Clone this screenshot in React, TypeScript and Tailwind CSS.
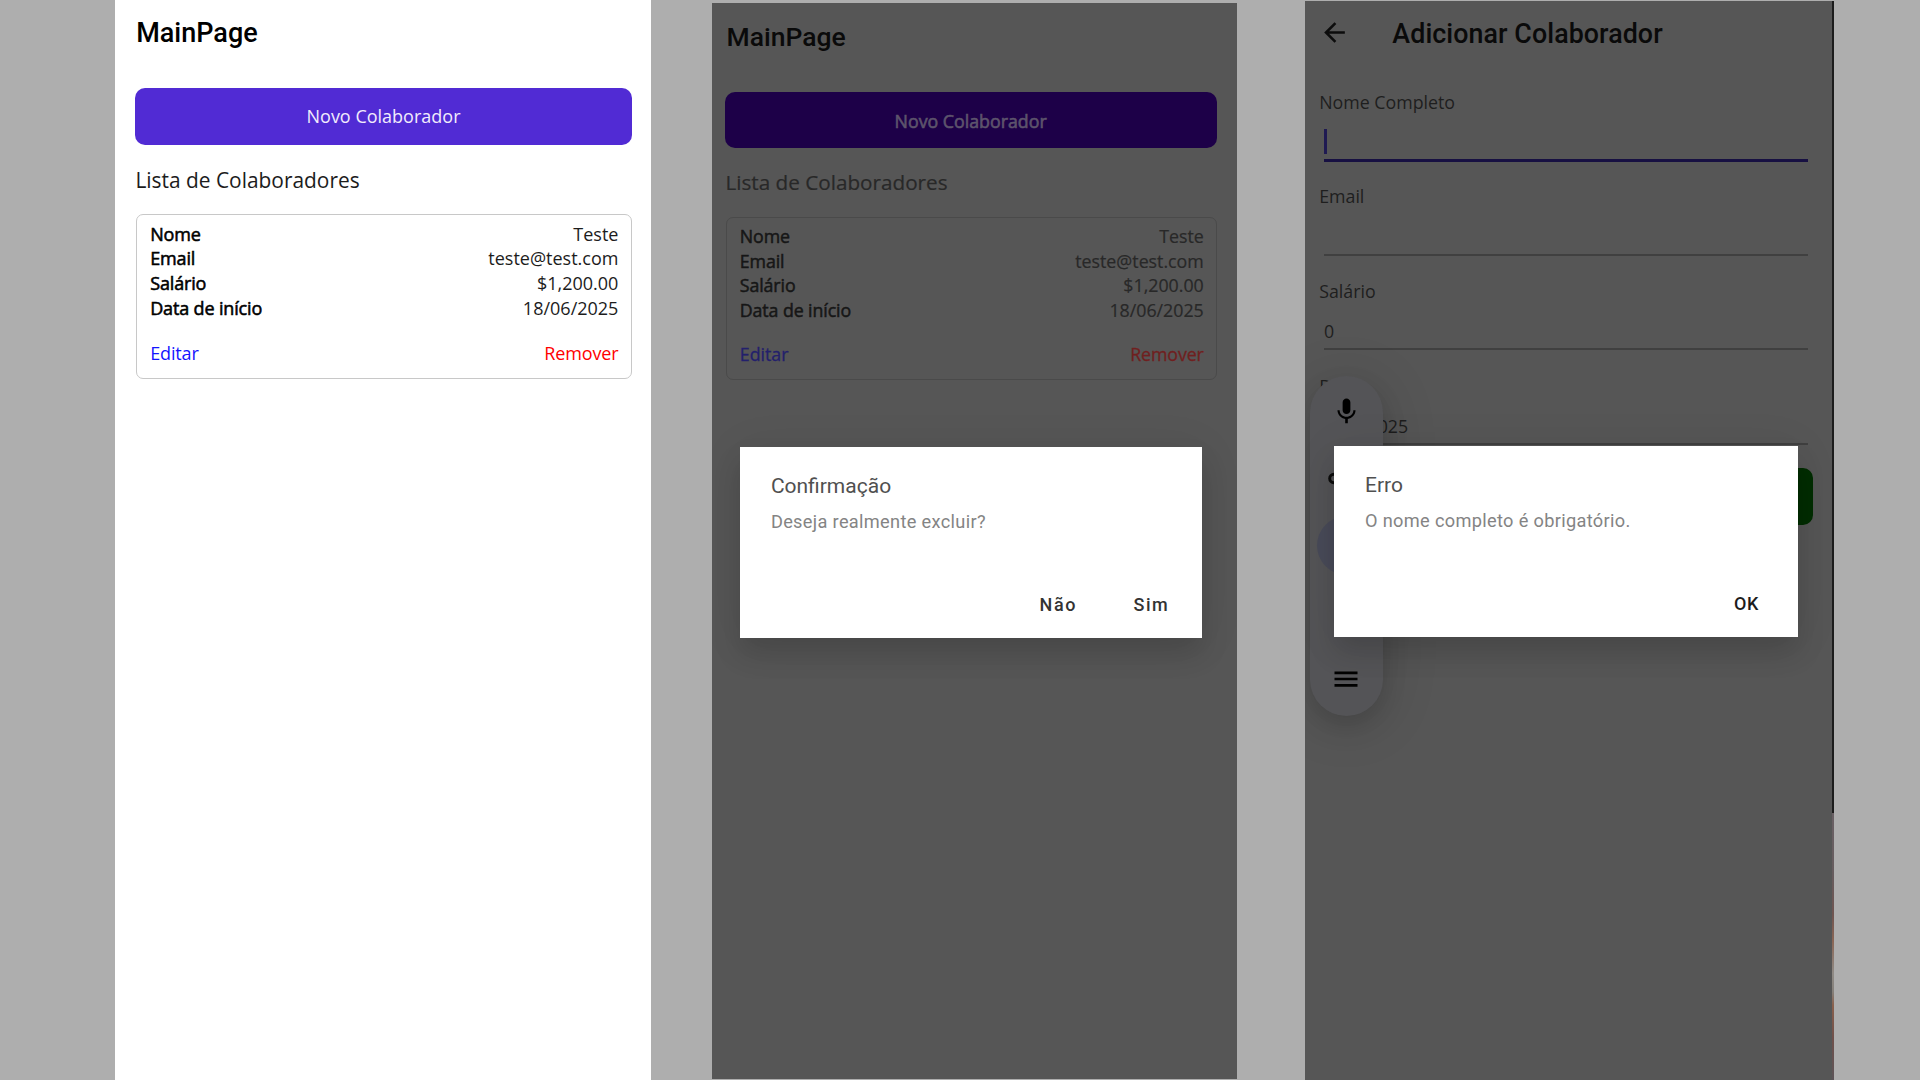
import type { ReactNode } from "react";

const employee = [
  ["Nome", "Teste"],
  ["Email", "teste@test.com"],
  ["Salário", "$1,200.00"],
  ["Data de início", "18/06/2025"],
];

function MainScreen() {
  return (
    <section className="h-[1080px] w-[536px] shrink-0 bg-white pl-[19.6px] pr-[19.4px] pt-[16.5px] font-['Open_Sans',sans-serif] text-[18px] text-[#1c1c1c]">
      <h1 className="pl-[1.2px] font-[Roboto,sans-serif] text-[27px] font-medium leading-8 text-black">MainPage</h1>
      <button className="mt-[39.2px] flex h-[57.5px] w-full items-center justify-center rounded-[10px] bg-[#512bd4] pt-[0.8px] text-[#f1ecfc]">
        Novo Colaborador
      </button>
      <h2 className="mt-[20.6px] pl-[0.4px] text-[20.9px] leading-7">Lista de Colaboradores</h2>
      <div className="ml-px mt-[19.9px] h-[165.6px] rounded-[7px] border border-[#c8c8c8] pl-[13.2px] pr-[12.6px] pt-[7px] leading-[24.7px]">
        {employee.map(([label, value]) => (
          <div key={label} className="flex justify-between">
            <span className="tracking-[-0.15px] text-black [-webkit-text-stroke:0.55px_black]">{label}</span>
            <span>{value}</span>
          </div>
        ))}
        <div className="mt-[20.2px] flex justify-between">
          <span className="tracking-[-0.15px] text-[#1414ff]">Editar</span>
          <span className="tracking-[-0.15px] text-[#ff0000]">Remover</span>
        </div>
      </div>
    </section>
  );
}

function Dialog({ title, message, place, children }: { title: string; message: string; place: string; children: ReactNode }) {
  return (
    <div
      className={`absolute flex h-[191px] flex-col bg-white pl-[31.3px] font-[Roboto,sans-serif] shadow-[0_16px_26px_rgba(0,0,0,0.13),0_4px_44px_rgba(0,0,0,0.07)] ${place}`}
    >
      <h3 className="mt-[25.2px] text-[21px] leading-7 text-[#505050]">{title}</h3>
      <p className="mt-[10px] text-[18.2px] leading-6 tracking-[0.33px] text-[#848484]">{message}</p>
      <div className="mt-[59px] flex justify-end text-[18px] font-medium leading-6">{children}</div>
    </div>
  );
}

function ConfirmScreen() {
  return (
    <section className="relative ml-[60.4px] mt-[3px] h-[1076px] w-[525px] shrink-0 overflow-hidden bg-[#565656] pl-[13.7px] pr-[20px] pt-[18px] font-['Open_Sans',sans-serif] text-[17.8px] text-[#282828]">
      <h1 className="pl-px font-[Roboto,sans-serif] text-[26.5px] font-medium leading-8 text-[#0a0a0a]">MainPage</h1>
      <button className="mt-[39.3px] flex h-[56px] w-full items-center justify-center rounded-[10px] bg-[#1d0048] pr-[1px] pt-[1.4px] text-[#5d546c] [-webkit-text-stroke:0.6px_#5d546c]">
        Novo Colaborador
      </button>
      <h2 className="mt-[20.2px] text-[20.7px] leading-7 [-webkit-text-stroke:0.2px_#282828]">Lista de Colaboradores</h2>
      <div className="ml-[0.5px] mt-[20.5px] h-[163px] rounded-[7px] border-[1.5px] border-[#4a4a4a] pl-[12.8px] pr-[12px] pt-[6.1px] leading-[24.6px]">
        {employee.map(([label, value]) => (
          <div key={label} className="flex justify-between">
            <span className="tracking-[-0.1px] text-[#161616] [-webkit-text-stroke:0.5px_#161616]">{label}</span>
            <span className="[-webkit-text-stroke:0.2px_#282828]">{value}</span>
          </div>
        ))}
        <div className="mt-[19.6px] flex justify-between">
          <span className="text-[#23206c] [-webkit-text-stroke:0.3px_#23206c]">Editar</span>
          <span className="tracking-[-0.1px] text-[#701f1f] [-webkit-text-stroke:0.3px_#701f1f]">Remover</span>
        </div>
      </div>
      <Dialog title="Confirmação" message="Deseja realmente excluir?" place="left-[27.8px] top-[443.7px] w-[462.7px]">
        <span className="mr-[56.3px] tracking-[1.7px] text-[#333333]">Não</span>
        <span className="mr-[33px] tracking-[1.5px] text-[#333333]">Sim</span>
      </Dialog>
    </section>
  );
}

function Field({ label, value, focused }: { label: string; value?: string; focused?: boolean }) {
  return (
    <div className="h-[94.7px]">
      <div className="h-6 pl-[0.8px] leading-6">{label}</div>
      <div
        className={
          focused
            ? "ml-[5.6px] mr-[5px] h-[48.6px] border-b-[3px] border-[#171042] pt-[15.6px]"
            : "ml-[5.6px] mr-[5px] h-[47.3px] border-b-2 border-[#404040] pt-[16.4px]"
        }
      >
        {focused ? <div className="h-[25px] w-[3px] bg-[#1f1a52]" /> : <div className="leading-6">{value}</div>}
      </div>
    </div>
  );
}

function AssistBar() {
  return (
    <div className="absolute left-[5.2px] top-[374.7px] flex h-[340px] w-[72.6px] flex-col items-center rounded-full bg-[#545457] shadow-[0_10px_24px_rgba(0,0,0,0.14),0_6px_60px_rgba(0,0,0,0.12)]">
      <svg viewBox="0 0 24 24" className="mt-[20.3px] size-[31px] shrink-0 fill-black">
        <path d="M12 14c1.66 0 3-1.34 3-3V5c0-1.66-1.34-3-3-3S9 3.34 9 5v6c0 1.66 1.34 3 3 3zm5.3-3c0 3-2.54 5.1-5.3 5.1S6.7 14 6.7 11H5c0 3.41 2.72 6.23 6 6.72V21h2v-3.28c3.28-.48 6-3.3 6-6.72h-1.7z" />
      </svg>
      <svg viewBox="0 0 36 20" className="mt-[41.5px] h-5 w-9 shrink-0 fill-none stroke-[#0c0c0c] stroke-[3]">
        <circle cx="5.9" cy="10.5" r="4.2" />
        <circle cx="30.1" cy="10.5" r="4.2" />
        <path d="M10 10.5h16" />
      </svg>
      <div className="mt-[27.5px] size-[59px] shrink-0 rounded-full bg-[#494b59]" />
      <svg viewBox="0 0 24 16" className="mt-[95.6px] h-4 w-6 shrink-0 stroke-black stroke-[2.7]">
        <path d="M.5 1.9h23M.5 8h23M.5 14.3h23" />
      </svg>
    </div>
  );
}

function AddScreen() {
  return (
    <section className="relative ml-[68.2px] mt-px flex h-[1079px] w-[529.2px] shrink-0 overflow-hidden bg-[#565656] font-['Open_Sans',sans-serif] text-[17.8px] text-[#1e1e1e]">
      <div className="w-[527px] pl-[13.4px] pr-[18.9px]">
        <header className="flex h-[88.6px] items-start pt-[16.3px]">
          <svg viewBox="0 0 24 24" className="ml-[0.5px] size-[31px] fill-[#0c0c0c]">
            <path d="M20 11H7.83l5.59-5.59L12 4l-8 8 8 8 1.41-1.41L7.83 13H20v-2z" />
          </svg>
          <h1 className="ml-[42.5px] mt-[1px] font-[Roboto,sans-serif] text-[26.8px] font-medium leading-8 tracking-[0.08px] text-[#0a0a0a]">
            Adicionar Colaborador
          </h1>
        </header>
        <Field label="Nome Completo" focused />
        <Field label="Email" />
        <Field label="Salário" value="0" />
        <Field label="Data" value="18/6/2025" />
        <div className="-mt-[0.7px] h-[57.6px] rounded-[10px] bg-[#002d00]" />
      </div>
      <div className="w-[2.2px]">
        <div className="h-[812px] bg-[#1c1c1c]" />
        <div className="h-[267px] bg-[linear-gradient(#6a6064,#665c5e_22%,#6f5450_38%,#8a6655_48%,#8f8a85_60%,#85807a_67%,#8a604c_72%,#70504a_84%,#5c5458)]" />
      </div>
      <AssistBar />
      <Dialog title="Erro" message="O nome completo é obrigatório." place="left-[28.8px] top-[445px] w-[464px]">
        <span className="mr-[38.6px] tracking-[0.7px] text-[#1c1c1c]">OK</span>
      </Dialog>
    </section>
  );
}

export default function App() {
  return (
    <main className="flex h-[1080px] w-[1920px] items-start overflow-hidden bg-[#aeaeae] pl-[115.4px]">
      <MainScreen />
      <ConfirmScreen />
      <AddScreen />
    </main>
  );
}
